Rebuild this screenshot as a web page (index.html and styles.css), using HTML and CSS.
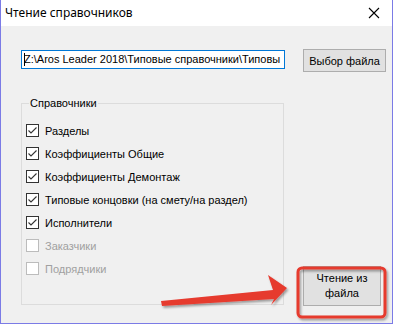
FILE: index.html
```html
<!DOCTYPE html>
<html lang="ru">
<head>
	<meta charset="UTF-8">
	<title>Чтение справочников</title>
	<link rel="stylesheet" href="styles.css">
</head>
<body>
	<div class="window">
		<div class="titlebar">
			<span class="title">Чтение справочников</span>
			<svg class="close" width="12" height="12" viewBox="0 0 12 12"><path d="M1 1L11 11M11 1L1 11" stroke="#000" stroke-width="1.1" fill="none"/></svg>
		</div>
		<div class="client">
			<div class="file-row">
				<div class="path"><span class="caret"></span>Z:\Aros Leader 2018\Типовые справочники\Типовы</div>
				<div class="btn btn-pick">Выбор файла</div>
			</div>
			<div class="lower">
				<fieldset class="group">
					<legend>Справочники</legend>
					<div class="check on"><span class="box"><svg width="11" height="11" viewBox="0 0 11 11"><path d="M1.5 5.5L4 8L9.5 2.5" stroke="#333" stroke-width="1.1" fill="none"/></svg></span>Разделы</div>
					<div class="check on"><span class="box"><svg width="11" height="11" viewBox="0 0 11 11"><path d="M1.5 5.5L4 8L9.5 2.5" stroke="#333" stroke-width="1.1" fill="none"/></svg></span>Коэффициенты Общие</div>
					<div class="check on"><span class="box"><svg width="11" height="11" viewBox="0 0 11 11"><path d="M1.5 5.5L4 8L9.5 2.5" stroke="#333" stroke-width="1.1" fill="none"/></svg></span>Коэффициенты Демонтаж</div>
					<div class="check on"><span class="box"><svg width="11" height="11" viewBox="0 0 11 11"><path d="M1.5 5.5L4 8L9.5 2.5" stroke="#333" stroke-width="1.1" fill="none"/></svg></span>Типовые концовки (на смету/на раздел)</div>
					<div class="check on"><span class="box"><svg width="11" height="11" viewBox="0 0 11 11"><path d="M1.5 5.5L4 8L9.5 2.5" stroke="#333" stroke-width="1.1" fill="none"/></svg></span>Исполнители</div>
					<div class="check off"><span class="box"></span>Заказчики</div>
					<div class="check off"><span class="box"></span>Подрядчики</div>
				</fieldset>
				<div class="btn btn-read">Чтение из<br>файла</div>
			</div>
			<!-- пометка поверх окна: рамка и стрелка -->
			<svg class="mark" width="393" height="325" viewBox="0 0 393 325">
				<defs>
					<filter id="sh" x="-10%" y="-30%" width="130%" height="180%">
						<feDropShadow dx="1.5" dy="2" stdDeviation="1.2" flood-color="#000" flood-opacity="0.35"/>
					</filter>
				</defs>
				<rect x="298" y="268" width="87" height="49" rx="4" ry="4" fill="none" stroke="#e63a2f" stroke-width="3" filter="url(#sh)"/>
				<polygon points="161,301 273,290 268,275 287,288 271,305 274,299 162,306" fill="#e63a2f" filter="url(#sh)"/>
			</svg>
		</div>
	</div>
</body>
</html>
```

FILE: styles.css
```css
*{
	margin: 0;
	padding: 0;
	box-sizing: border-box;
}
body{
	background: #fff;
	font-family: "Liberation Sans", Arial, sans-serif;
	font-size: 11px;
	color: #000;
}
.window{
	width: 393px;
	height: 324px;
	background: #f0f0f0;
	border: 1px solid #7b7be6;
	border-top: none;
	position: relative;
}
.titlebar{
	height: 26px;
	background: #fff;
	display: flex;
	align-items: center;
	justify-content: space-between;
	padding: 0 12px 0 4px;
}
.title{
	font-family: "Noto Sans", sans-serif;
	font-size: 12px;
	padding-bottom: 1px;
}
.close{
	display: block;
}
.file-row{
	display: flex;
	align-items: flex-start;
	padding: 23px 0 0 20px;
}
.path{
	width: 264px;
	height: 19px;
	margin-top: 1px;
	border: 1px solid #0078d7;
	background: #fff;
	line-height: 17px;
	padding-left: 2px;
	white-space: nowrap;
	overflow: hidden;
	display: flex;
	align-items: center;
}
.caret{
	display: inline-block;
	width: 1px;
	height: 13px;
	background: #000;
	margin-right: -1px;
}
.btn{
	background: #e1e1e1;
	border: 1px solid #adadad;
	display: flex;
	align-items: center;
	justify-content: center;
	text-align: center;
}
.btn-pick{
	width: 83px;
	height: 23px;
	margin-left: 18px;
}
.lower{
	display: flex;
	align-items: flex-end;
	padding: 25px 0 0 20px;
}
.group{
	width: 263px;
	height: 208px;
	border: 1px solid #dcdcdc;
	padding: 9px 0 0 4px;
}
.group legend{
	margin-left: 3px;
	padding: 0 1px;
	line-height: 13px;
}
.check{
	display: flex;
	align-items: center;
	height: 23px;
	gap: 6px;
}
.box{
	width: 13px;
	height: 13px;
	border: 1px solid #333;
	background: #fff;
	display: flex;
}
.check.off{
	color: #a0a0a0;
}
.check.off .box{
	border-color: #bcbcbc;
}
.btn-read{
	width: 78px;
	height: 40px;
	margin: 0 0 -1px 19px;
	line-height: 15px;
}
.mark{
	position: absolute;
	left: -1px;
	top: 0;
	pointer-events: none;
}
```
